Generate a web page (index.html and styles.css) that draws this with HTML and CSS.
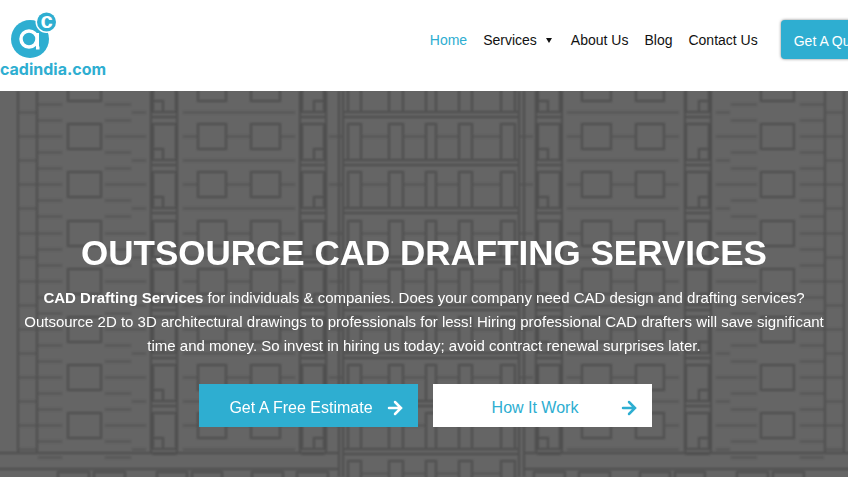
FILE: index.html
```html
<!DOCTYPE html>
<html lang="en">
<head>
  <meta charset="UTF-8" />
  <meta name="viewport" content="width=device-width, initial-scale=1" />
  <title>Outsource CAD Drafting Services</title>
  <link rel="stylesheet" href="styles.css">
</head>
<body>
  <header class="site-header">
    <div class="header-inner">
      <a class="logo" href="#">
        <svg class="logo-mark" viewBox="0 0 48 48" aria-hidden="true">
          <circle cx="20" cy="28" r="19" fill="#2eaed1" />
          <circle cx="19" cy="28" r="8" fill="none" stroke="#fff" stroke-width="3.5" />
          <path d="M27.500 22v15h2" fill="none" stroke="#fff" stroke-width="3" />
          <circle cx="36.500" cy="11" r="11" fill="#fff" />
          <circle cx="36.500" cy="11" r="9.500" fill="#2eaed1" />
          <text class="logo-letter" x="36.500" y="17" text-anchor="middle">c</text>
        </svg>
        <span class="logo-name">cadindia.com</span>
      </a>
      <nav class="main-nav">
        <a class="active" href="#">Home</a>
        <a href="#">Services <span class="caret"></span></a>
        <a href="#">About Us</a>
        <a href="#">Blog</a>
        <a href="#">Contact Us</a>
      </nav>
      <a class="btn-quote" href="#">Get A Quote</a>
    </div>
  </header>

  <main class="hero">
    <svg class="hero-drawing" viewBox="0 0 848 386" preserveAspectRatio="xMidYMin slice" aria-hidden="true">
      <defs>
        <!-- one storey of the left wing -->
        <g id="wing">
          <path d="M68 0h33v25H68z M198 0h28v25h-28z M251 0h29v25h-29z" />
          <path d="M153 0h23v36h-23z M153 25h10v11 M152 41h25" />
          <path d="M302 0h22v36h-22z M324 25h-10v11 M301 41h24" />
          <path class="thin" d="M18 12.500h44 M105 12.500h41 M38 28.500h24 M105 28.500h26 M18 36.500h19 M132 36.500h14 M38 44.500h24 M105 44.500h26" />
          <path class="thin" d="M183 12.500h15 M226 12.500h25 M280 12.500h15 M183 36.500h112 M329 12.500h13" />
        </g>
        <!-- one storey of the central block -->
        <g id="tower">
          <path d="M348 36V0h13v36 M389 36V0h14v36 M426 36V0h10v36 M459 36V0h13v36 M501 36V0h14v36" />
          <path d="M343 36h176 M343 41h176" />
          <path class="thin" d="M361 12.500h28 M403 12.500h23 M436 12.500h23 M472 12.500h29" />
        </g>
        <g id="side">
          <path d="M18 0v362 M37 0v362 M151 0v362 M177 0v362 M300 0v362 M326 0v362" />
          <use href="#wing" y="-15" />
          <use href="#wing" y="33" />
          <use href="#wing" y="81" />
          <use href="#wing" y="130" />
          <use href="#wing" y="178" />
          <use href="#wing" y="226" />
          <use href="#wing" y="274" />
          <use href="#wing" y="322" />
          <path d="M-20 362h359 M-20 378h359" />
          <path d="M58 390v-9h31v9 M94 390v-9h31v9 M157 390v-9h30v9 M192 390v-9h30v9 M252 390v-9h31v9 M297 390v-9h31v9" />
        </g>
      </defs>
      <g class="lines">
        <use href="#side" />
        <use href="#side" transform="translate(862) scale(-1 1)" />
        <path d="M339 0v386 M343 0v386 M519 0v386 M524 0v386" />
        <use href="#tower" y="-15" />
        <use href="#tower" y="33" />
        <use href="#tower" y="81" />
        <use href="#tower" y="130" />
        <use href="#tower" y="178" />
        <use href="#tower" y="226" />
        <use href="#tower" y="274" />
        <use href="#tower" y="322" />
        <use href="#tower" y="370" />
      </g>
    </svg>

    <div class="hero-content">
      <h1>OUTSOURCE CAD DRAFTING SERVICES</h1>
      <p><strong>CAD Drafting Services</strong> for individuals &amp; companies. Does your company need CAD design and drafting services? Outsource 2D to 3D architectural drawings to professionals for less! Hiring professional CAD drafters will save significant time and money. So invest in hiring us today; avoid contract renewal surprises later.</p>
      <div class="hero-buttons">
        <a class="btn btn-blue" href="#">
          <span>Get A Free Estimate</span>
          <svg viewBox="0 0 14 14" aria-hidden="true"><path d="M1 7h11 M7 1l6 6-6 6" /></svg>
        </a>
        <a class="btn btn-white" href="#">
          <span>How It Work</span>
          <svg viewBox="0 0 14 14" aria-hidden="true"><path d="M1 7h11 M7 1l6 6-6 6" /></svg>
        </a>
      </div>
    </div>
  </main>
</body>
</html>
```
FILE: styles.css
```css
* {
  box-sizing: border-box;
}
html, body {
  height: 100%;
  margin: 0;
}
body {
  display: flex;
  flex-direction: column;
  font-family: "Liberation Sans", Arial, sans-serif;
  font-size: 14px;
  color: #111;
  background: #fff;
  overflow: hidden;
}
a {
  color: inherit;
  text-decoration: none;
}

/* header */
.site-header {
  flex: none;
  overflow: hidden;
}
.header-inner {
  display: flex;
  align-items: flex-start;
  min-width: 883px;
  padding: 11px 0 12px;
}
.logo {
  display: flex;
  flex-direction: column;
  color: #2eaed1;
}
.logo-mark {
  width: 48px;
  height: 48px;
  margin-left: 10px;
  overflow: visible;
}
.logo-letter {
  font: bold 22px/24px "Liberation Sans", Arial, sans-serif;
  fill: #fff;
}
.logo-name {
  font: bold 16px/20px Inter, sans-serif;
}
.main-nav {
  display: flex;
  align-items: center;
  gap: 16px;
  height: 40px;
  margin-top: 9px;
  margin-left: auto;
  margin-right: 23px;
}
.main-nav a {
  display: flex;
  align-items: center;
}
.main-nav .active {
  color: #2eaed1;
}
.caret {
  margin: 0 3px 0 9px;
  border: 3px solid transparent;
  border-top: 5px solid #111;
  border-bottom: 0;
}
.btn-quote {
  margin-top: 9px;
  padding: 13px 13px 10px;
  line-height: 16px;
  color: #fff;
  background: #2eaed1;
  border-radius: 4px;
  box-shadow: 0 0 3px rgba(0, 0, 0, 0.5);
}

/* hero */
.hero {
  flex: 1;
  position: relative;
  display: flex;
  justify-content: center;
  background: #656565;
  color: #fff;
  overflow: hidden;
}
.hero-drawing {
  position: absolute;
  top: 0;
  left: 0;
  width: 100%;
  height: 100%;
}
.lines {
  fill: none;
  stroke: #404040;
  stroke-width: 2;
  opacity: 0.6;
  filter: blur(1px);
}
.lines .thin,
.thin {
  stroke: #444;
  stroke-width: 1.5;
}
.hero-content {
  position: relative;
  max-width: 848px;
  padding: 142px 10px 50px;
  text-align: center;
}
h1 {
  margin: 0 0 13px;
  font-size: 35px;
  line-height: 40px;
}
p {
  margin: 0 0 26px;
  font-size: 15px;
  line-height: 24px;
}
.hero-buttons {
  display: flex;
  justify-content: center;
  gap: 15px;
  padding-left: 2px;
}
.btn {
  display: flex;
  align-items: center;
  width: 219px;
  padding: 14px 16px 10px;
  font-size: 16px;
  line-height: 19px;
}
.btn span {
  flex: 1;
}
.btn svg {
  width: 14px;
  height: 14px;
  fill: none;
  stroke: currentColor;
  stroke-width: 2.5;
  stroke-linecap: round;
  overflow: visible;
}
.btn-blue {
  background: #2eaed1;
}
.btn-white {
  color: #2eaed1;
  background: #fff;
}
```
